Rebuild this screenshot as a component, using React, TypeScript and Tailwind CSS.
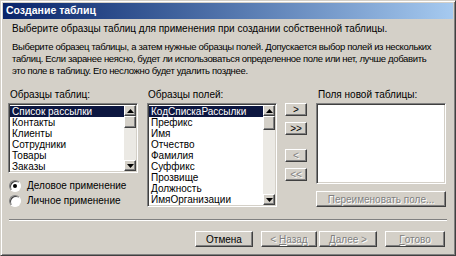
import React from "react";

const raised =
  "border border-t-white border-l-white border-b-[#404040] border-r-[#404040] shadow-[inset_-1px_-1px_0_#808080,inset_1px_1px_0_#d4d0c8] bg-[#d4d0c8]";
const sunken =
  "border border-t-[#808080] border-l-[#808080] border-b-white border-r-white shadow-[inset_1px_1px_0_#404040,inset_-1px_-1px_0_#d4d0c8]";
const disabledText = "text-[#808080] [text-shadow:1px_1px_0_#ffffff]";

function Arrow({ up }: { up?: boolean }) {
  return (
    <div className={`${raised} w-full h-[11px] flex items-center justify-center`}>
      <svg width="7" height="4" viewBox="0 0 7 4">
        {up ? <polygon points="3.5,0 7,4 0,4" fill="#000" /> : <polygon points="0,0 7,0 3.5,4" fill="#000" />}
      </svg>
    </div>
  );
}

function ScrollBar({ thumb }: { thumb: number }) {
  return (
    <div className="w-[12px] h-full flex flex-col bg-[#ebe9e4]">
      <Arrow up />
      <div className={`${raised} w-full`} style={{ height: thumb }} />
      <div className="flex-1" />
      <Arrow />
    </div>
  );
}

function ListBox({ items, height, thumb }: { items: string[]; height: number; thumb: number }) {
  return (
    <div className={`${sunken} bg-white p-[1px] flex`} style={{ height }}>
      <div className="flex-1 overflow-hidden pt-[1px]">
        {items.map((item, i) => (
          <div
            key={item}
            className={`h-[11px] leading-[11px] pl-[2px] whitespace-nowrap ${
              i === 0 ? "bg-[#0c1640] text-white" : "text-black"
            }`}
          >
            {item}
          </div>
        ))}
      </div>
      <ScrollBar thumb={thumb} />
    </div>
  );
}

function Radio({ checked, label }: { checked?: boolean; label: string }) {
  return (
    <div className="flex items-center h-[15px] gap-[6px]">
      <div className="w-[12px] h-[12px] rounded-full bg-white border border-t-[#808080] border-l-[#808080] border-b-white border-r-white shadow-[inset_1px_1px_0_#404040] flex items-center justify-center">
        {checked && <div className="w-[4px] h-[4px] rounded-full bg-black" />}
      </div>
      <span>{label}</span>
    </div>
  );
}

function Btn({
  children,
  w,
  h = 16,
  disabled,
  strong,
}: {
  children: React.ReactNode;
  w: number;
  h?: number;
  disabled?: boolean;
  strong?: boolean;
}) {
  return (
    <div
      className={`${raised} flex items-center justify-center ${disabled ? disabledText : "text-black"} ${
        strong ? "outline outline-1 outline-black" : ""
      }`}
      style={{ width: w, height: h }}
    >
      {children}
    </div>
  );
}

export default function App() {
  const tables = ["Список рассылки", "Контакты", "Клиенты", "Сотрудники", "Товары", "Заказы"];
  const fields = [
    "КодСпискаРассылки",
    "Префикс",
    "Имя",
    "Отчество",
    "Фамилия",
    "Суффикс",
    "Прозвище",
    "Должность",
    "ИмяОрганизации",
    "Адрес",
  ];

  return (
    <div className="w-[456px] h-[256px] bg-[#d4d0c8] flex flex-col border border-t-[#d4d0c8] border-l-[#d4d0c8] border-b-[#404040] border-r-[#404040] shadow-[inset_1px_1px_0_#ffffff,inset_-1px_-1px_0_#808080] p-[2px] font-['Liberation_Sans',Arial,sans-serif] text-[10px] text-black overflow-hidden">
      <div className="h-[16px] bg-gradient-to-r from-[#0a246a] to-[#a6caf0] flex items-center pl-[3px] text-white font-bold text-[10.5px]">
        Создание таблиц
      </div>

      <div className="pl-[9px] pt-[4px] leading-[11px]">
        Выберите образцы таблиц для применения при создании собственной таблицы.
      </div>
      <div className="pl-[9px] mt-[7px] leading-[12px] text-[9.5px] tracking-[-0.35px] whitespace-nowrap">
        <div>Выберите образец таблицы, а затем нужные образцы полей. Допускается выбор полей из нескольких</div>
        <div>таблиц. Если заранее неясно, будет ли использоваться определенное поле или нет, лучше добавить</div>
        <div>это поле в таблицу. Его несложно будет удалить позднее.</div>
      </div>

      <div className="flex mt-[12px] pl-[5px]">
        <div className="w-[130px] flex flex-col">
          <div className="h-[14px] pl-[2px] leading-[11px]">Образцы таблиц:</div>
          <ListBox items={tables} height={70} thumb={12} />
          <div className="flex flex-col mt-[5px] pl-[1px]">
            <Radio checked label="Деловое применение" />
            <Radio label="Личное применение" />
          </div>
        </div>

        <div className="w-[130px] ml-[9px] flex flex-col">
          <div className="h-[14px] pl-[1px] leading-[11px]">Образцы полей:</div>
          <ListBox items={fields} height={104} thumb={14} />
        </div>

        <div className="w-[22px] ml-[8px] flex flex-col pt-[14px]">
          <Btn w={22} h={13}>&gt;</Btn>
          <div className="mt-[6px]">
            <Btn w={22} h={13}>&gt;&gt;</Btn>
          </div>
          <div className="mt-[14px]">
            <Btn w={22} h={13} disabled>&lt;</Btn>
          </div>
          <div className="mt-[6px]">
            <Btn w={22} h={13} disabled>&lt;&lt;</Btn>
          </div>
        </div>

        <div className="w-[130px] ml-[9px] flex flex-col">
          <div className="h-[14px] pl-[2px] leading-[11px]">Поля новой таблицы:</div>
          <div className={`${sunken} bg-white h-[81px]`} />
          <div className="mt-[7px]">
            <Btn w={130} h={16} disabled>Переименовать поле...</Btn>
          </div>
        </div>
      </div>

      <div className="mt-[11px] mx-[6px] h-[2px] border-t border-t-[#808080] border-b border-b-white" />

      <div className="flex justify-end gap-[8px] pr-[8px] mt-[10px]">
        <Btn w={58} h={16}>Отмена</Btn>
        <div className="flex gap-[2px]">
          <Btn w={56} h={16} disabled>
            &lt;&nbsp;<span className="underline">Н</span>азад
          </Btn>
          <Btn w={58} h={16} disabled>
            <span className="underline">Д</span>алее&nbsp;&gt;
          </Btn>
        </div>
        <Btn w={60} h={16} disabled>
          <span className="underline">Г</span>отово
        </Btn>
      </div>
    </div>
  );
}
